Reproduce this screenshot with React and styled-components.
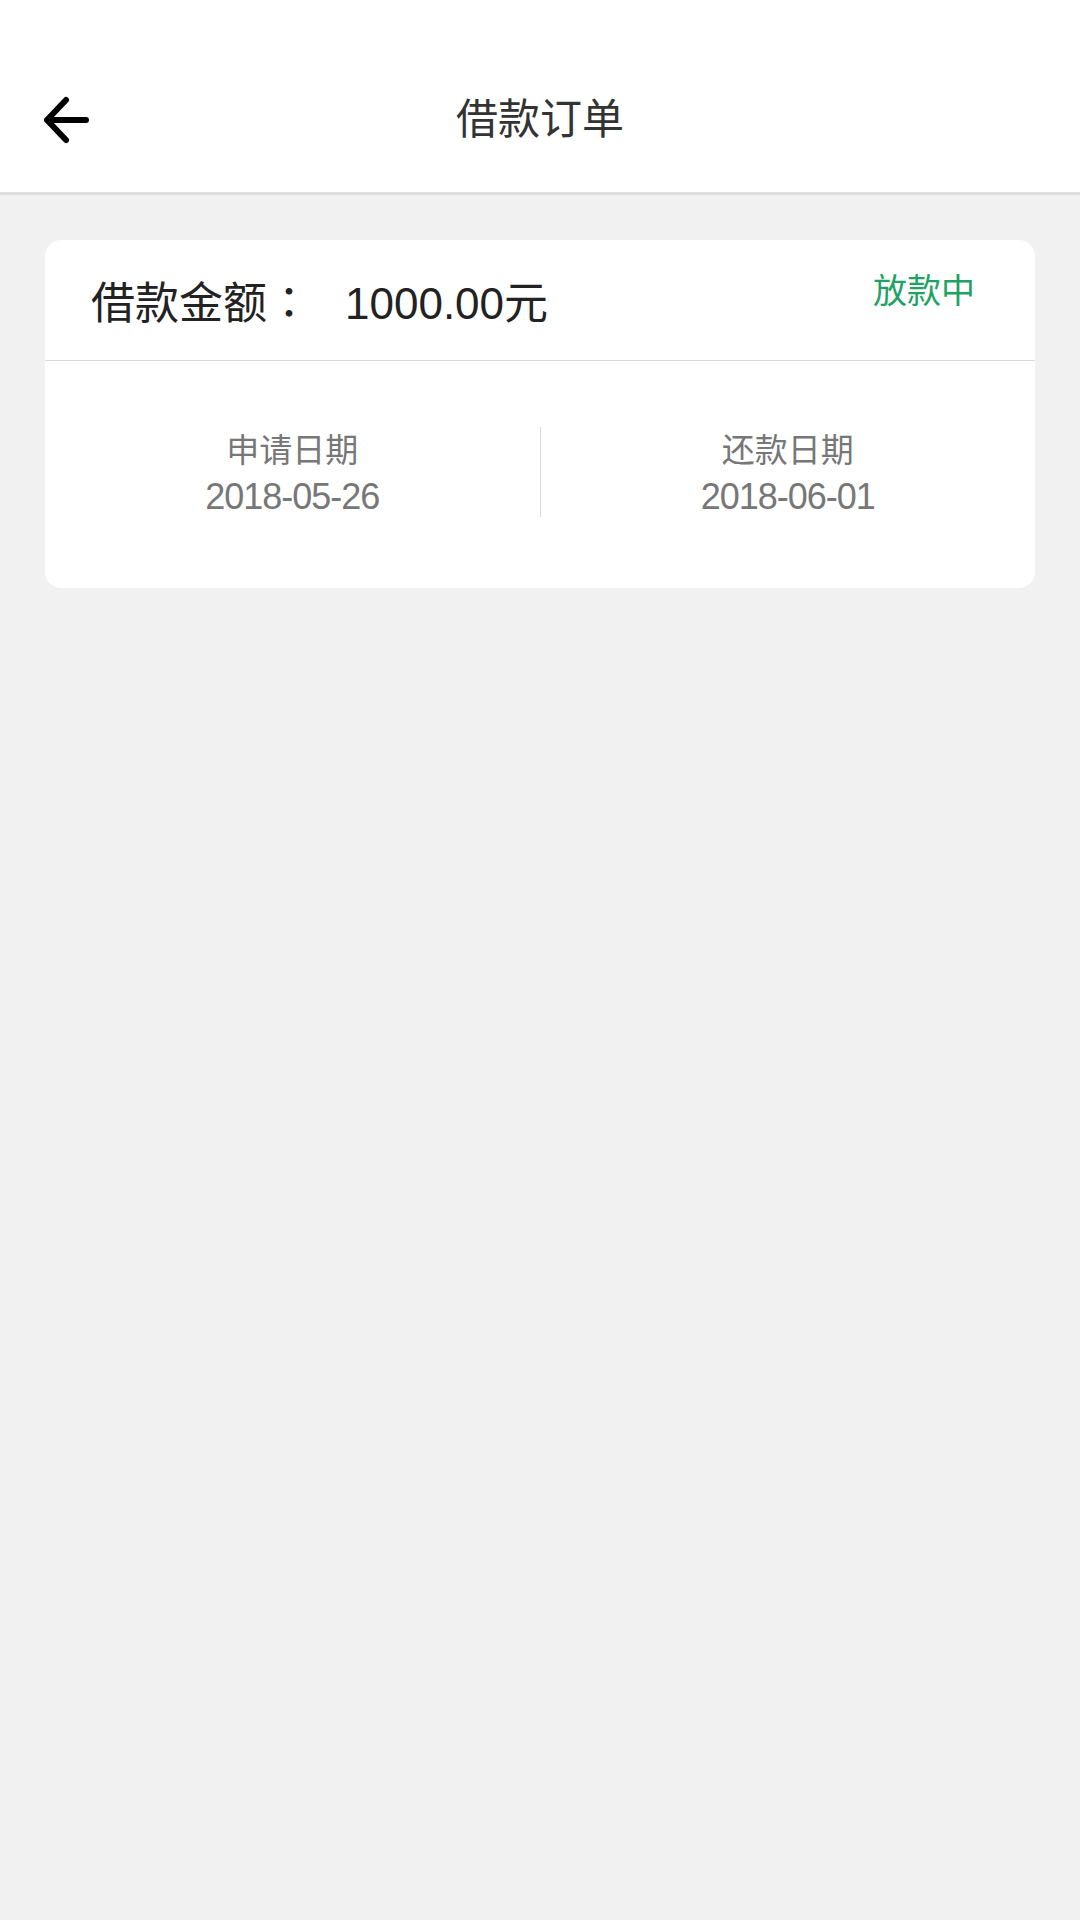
import React from "react";
import styled, { createGlobalStyle } from "styled-components";

const GlobalStyle = createGlobalStyle`
  html, body {
    margin: 0;
    padding: 0;
    background: #f1f1f1;
    font-family: "Liberation Sans", "Noto Sans CJK SC", sans-serif;
  }
  * { box-sizing: border-box; }
`;

const Page = styled.div`
  min-height: 1920px;
  width: 1080px;
  background: #f1f1f1;
`;

const Header = styled.header`
  height: 195px;
  padding-top: 48px;
  background: #ffffff;
  border-bottom: 3px solid #dedede;
  display: grid;
  grid-template-columns: 140px 1fr 140px;
  align-items: center;
`;

const BackButton = styled.button`
  height: 144px;
  border: 0;
  background: transparent;
  padding: 0 0 0 42px;
  display: flex;
  align-items: center;
  cursor: pointer;
`;

const Title = styled.h1`
  margin: 0;
  text-align: center;
  font-size: 42px;
  line-height: 144px;
  font-weight: 400;
  color: #333333;
`;

const Card = styled.section`
  margin: 45px 45px 0;
  background: #ffffff;
  border-radius: 16px;
  overflow: hidden;
`;

const AmountRow = styled.div`
  height: 121px;
  border-bottom: 1px solid #d9d9d9;
  display: flex;
  align-items: center;
  justify-content: space-between;
  padding: 0 60px 0 46px;
`;

const AmountText = styled.div`
  font-size: 44px;
  line-height: 50px;
  color: #222222;
  margin-top: 3px;
`;

const Colon = styled.span`
  font-family: "Noto Sans CJK TC", "Noto Sans CJK SC", sans-serif;
`;

const AmountValue = styled.span`
  margin-left: 34px;
`;

const Status = styled.span`
  align-self: flex-start;
  margin-top: 31px;
  font-size: 34px;
  line-height: 40px;
  color: #1fa363;
`;

const DateRow = styled.div`
  display: flex;
  padding: 66px 0 71px;
`;

const DateCol = styled.div`
  flex: 1;
  height: 90px;
  text-align: center;
  border-left: ${(p) => (p.$divider ? "1px solid #d9d9d9" : "0")};
`;

const DateLabel = styled.div`
  font-size: 33px;
  line-height: 48px;
  color: #777777;
`;

const DateValue = styled.div`
  font-size: 36px;
  line-height: 44px;
  letter-spacing: -1px;
  color: #777777;
`;

const BackIcon = () => (
  <svg width="50" height="50" viewBox="0 0 50 50" fill="none">
    <path
      d="M5 25 H44 M24 5 L5 25 L24 45"
      stroke="#000"
      strokeWidth="6"
      strokeLinecap="round"
      strokeLinejoin="round"
    />
  </svg>
);

export default function App() {
  return (
    <Page>
      <GlobalStyle />
      <Header>
        <BackButton aria-label="返回">
          <BackIcon />
        </BackButton>
        <Title>借款订单</Title>
        <div />
      </Header>
      <Card>
        <AmountRow>
          <AmountText>
            借款金额<Colon>：</Colon>
            <AmountValue>1000.00元</AmountValue>
          </AmountText>
          <Status>放款中</Status>
        </AmountRow>
        <DateRow>
          <DateCol>
            <DateLabel>申请日期</DateLabel>
            <DateValue>2018-05-26</DateValue>
          </DateCol>
          <DateCol $divider>
            <DateLabel>还款日期</DateLabel>
            <DateValue>2018-06-01</DateValue>
          </DateCol>
        </DateRow>
      </Card>
    </Page>
  );
}
